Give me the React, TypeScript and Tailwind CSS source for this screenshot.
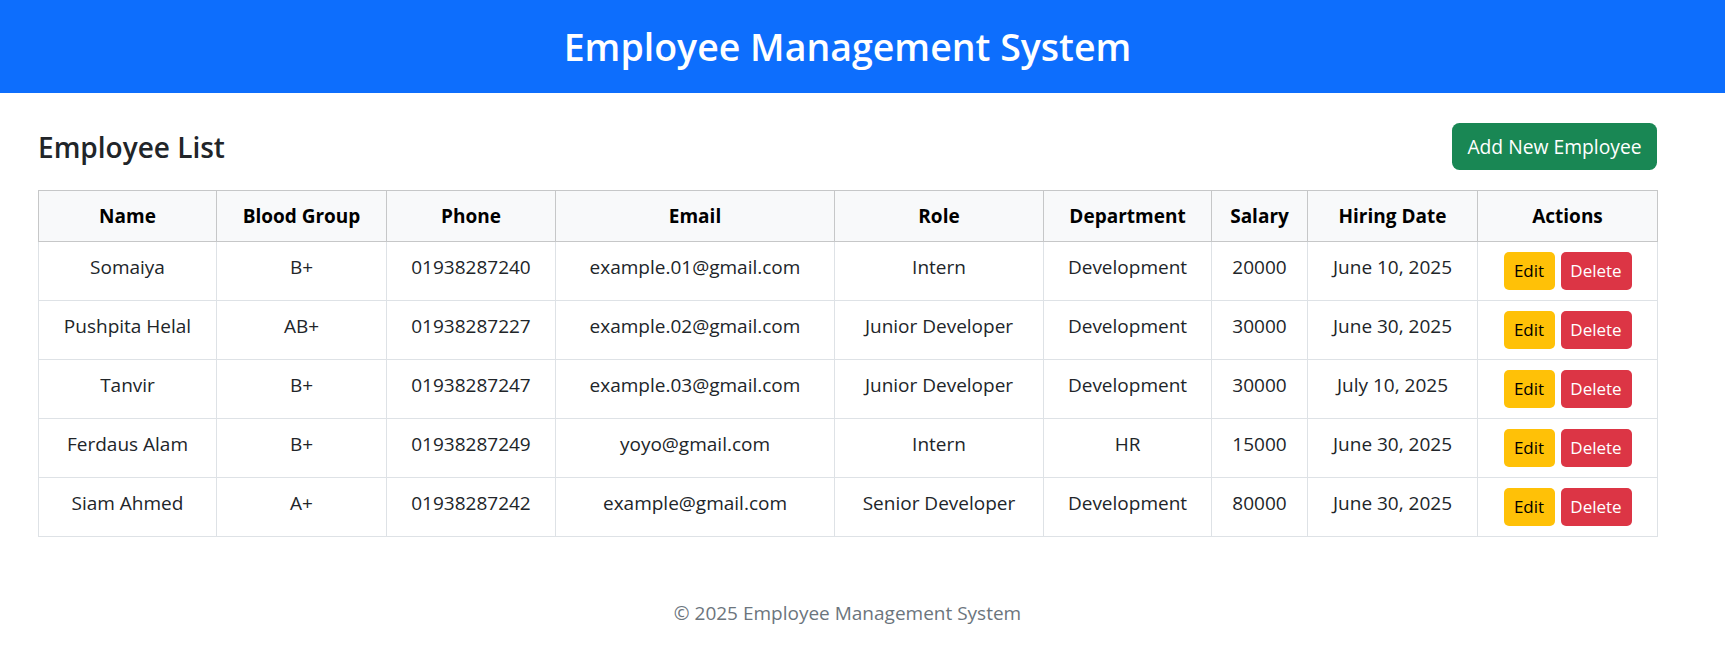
const employees = [
  { name: "Somaiya", blood: "B+", phone: "01938287240", email: "example.01@gmail.com", role: "Intern", dept: "Development", salary: "20000", hired: "June 10, 2025" },
  { name: "Pushpita Helal", blood: "AB+", phone: "01938287227", email: "example.02@gmail.com", role: "Junior Developer", dept: "Development", salary: "30000", hired: "June 30, 2025" },
  { name: "Tanvir", blood: "B+", phone: "01938287247", email: "example.03@gmail.com", role: "Junior Developer", dept: "Development", salary: "30000", hired: "July 10, 2025" },
  { name: "Ferdaus Alam", blood: "B+", phone: "01938287249", email: "yoyo@gmail.com", role: "Intern", dept: "HR", salary: "15000", hired: "June 30, 2025" },
  { name: "Siam Ahmed", blood: "A+", phone: "01938287242", email: "example@gmail.com", role: "Senior Developer", dept: "Development", salary: "80000", hired: "June 30, 2025" },
];

const headers = ["Name", "Blood Group", "Phone", "Email", "Role", "Department", "Salary", "Hiring Date", "Actions"];

const Cell = ({ children }: { children: React.ReactNode }) => (
  <td className="h-[59px] border border-[#dee2e6] px-[10px] pt-[10px] align-top leading-[30px]">
    {children}
  </td>
);

export default function App() {
  return (
    <div className="min-h-screen bg-white font-['Segoe_UI','Open_Sans',sans-serif] text-[#212529]">
      {/* Top bar */}
      <header className="flex h-[93px] items-center bg-[#0d6efd]">
        <h1 className="w-[1695px] text-center text-[37.5px] font-semibold leading-[48px] text-white">
          Employee Management System
        </h1>
      </header>

      <main className="w-[1695px] px-[38px] pt-[30px]">
        <div className="mb-[20px] flex h-[47px] items-center justify-between">
          <h2 className="text-[28px] font-semibold leading-[36px] text-[#212529]">Employee List</h2>
          <button className="h-[47px] w-[205px] rounded-[7.5px] bg-[#198754] text-[19.3px] leading-[30px] text-white">
            Add New Employee
          </button>
        </div>

        <table className="w-[1619px] table-fixed border-collapse text-center text-[19px]">
          <colgroup>
            <col className="w-[178px]" />
            <col className="w-[170px]" />
            <col className="w-[169px]" />
            <col className="w-[279px]" />
            <col className="w-[209px]" />
            <col className="w-[168px]" />
            <col className="w-[96px]" />
            <col className="w-[170px]" />
            <col className="w-[180px]" />
          </colgroup>
          <thead>
            <tr>
              {headers.map((h) => (
                <th
                  key={h}
                  className="h-[51px] border border-[#c6c7c8] bg-[#f8f9fa] px-[10px] py-[10px] font-bold leading-[30px] text-black"
                >
                  {h}
                </th>
              ))}
            </tr>
          </thead>
          <tbody>
            {employees.map((e) => (
              <tr key={e.name}>
                <Cell>{e.name}</Cell>
                <Cell>{e.blood}</Cell>
                <Cell>{e.phone}</Cell>
                <Cell>{e.email}</Cell>
                <Cell>{e.role}</Cell>
                <Cell>{e.dept}</Cell>
                <Cell>{e.salary}</Cell>
                <Cell>{e.hired}</Cell>
                <td className="h-[59px] border border-[#dee2e6] px-[10px] pt-[10px] align-top">
                  <div className="flex justify-center gap-[6px]">
                    <button className="h-[38px] w-[51px] rounded-[5px] bg-[#ffc107] text-[17px] text-black">
                      Edit
                    </button>
                    <button className="h-[38px] w-[71px] rounded-[5px] bg-[#dc3545] text-[17px] text-white">
                      Delete
                    </button>
                  </div>
                </td>
              </tr>
            ))}
          </tbody>
        </table>
      </main>

      <footer className="mt-[61px] w-[1695px] text-center text-[19px] leading-[30px] text-[#6c757d]">
        © 2025 Employee Management System
      </footer>
    </div>
  );
}
